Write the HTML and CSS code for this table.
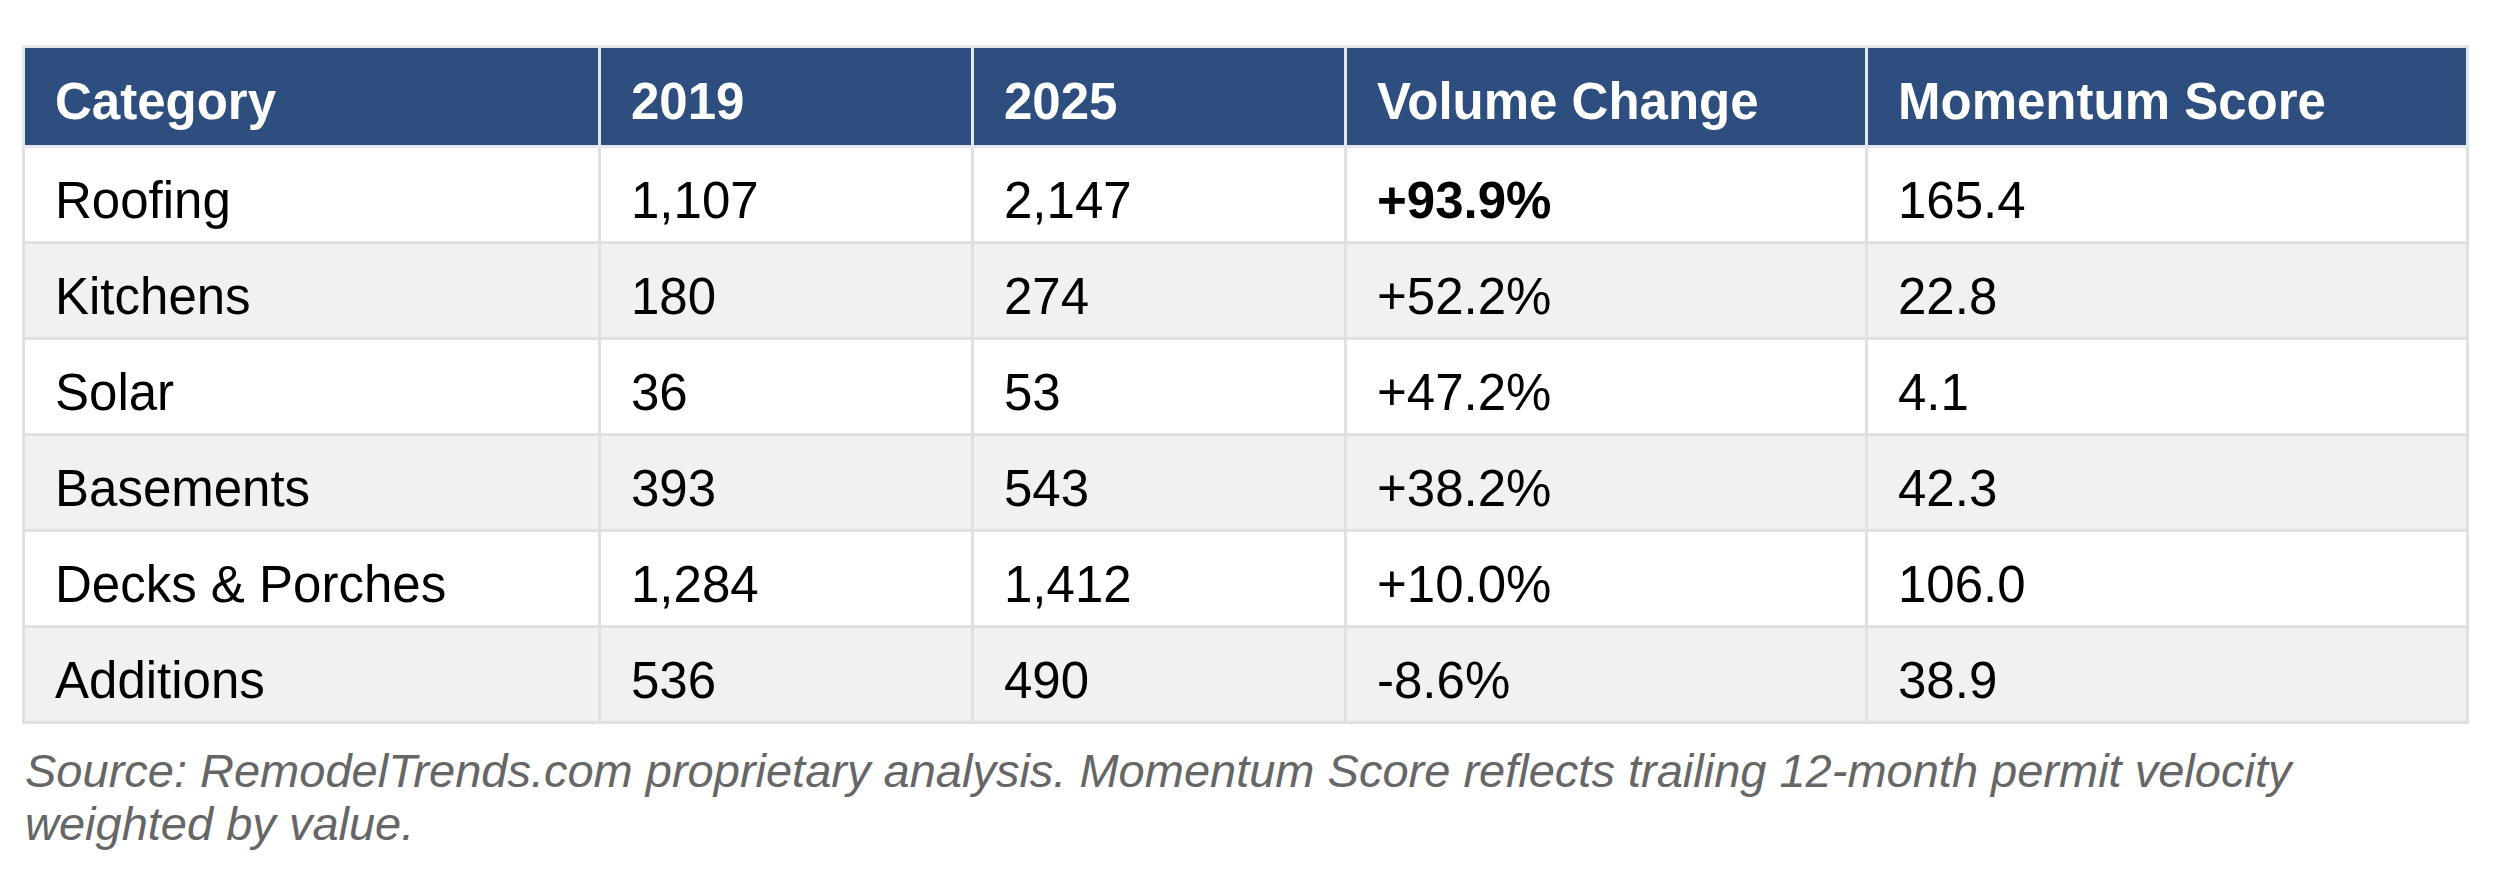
FILE: index.html
```html
<!DOCTYPE html>
<html>
<head>
<meta charset="utf-8">
<link rel="stylesheet" href="styles.css">
</head>
<body>
<div class="page">
  <table class="data">
    <colgroup>
      <col class="c1"><col class="c2"><col class="c3"><col class="c4"><col class="c5">
    </colgroup>
    <thead>
      <tr><th>Category</th><th>2019</th><th>2025</th><th>Volume Change</th><th>Momentum Score</th></tr>
    </thead>
    <tbody>
      <tr><td>Roofing</td><td>1,107</td><td>2,147</td><td class="strong">+93.9%</td><td>165.4</td></tr>
      <tr><td>Kitchens</td><td>180</td><td>274</td><td>+52.2%</td><td>22.8</td></tr>
      <tr><td>Solar</td><td>36</td><td>53</td><td>+47.2%</td><td>4.1</td></tr>
      <tr><td>Basements</td><td>393</td><td>543</td><td>+38.2%</td><td>42.3</td></tr>
      <tr><td>Decks &amp; Porches</td><td>1,284</td><td>1,412</td><td>+10.0%</td><td>106.0</td></tr>
      <tr><td>Additions</td><td>536</td><td>490</td><td>-8.6%</td><td>38.9</td></tr>
    </tbody>
  </table>
  <p class="source">Source: RemodelTrends.com proprietary analysis. Momentum Score reflects trailing 12-month permit velocity weighted by value.</p>
</div>
</body>
</html>
```
FILE: styles.css
```css
html, body {
  margin: 0;
  padding: 0;
  background: #ffffff;
}
.page {
  padding: 45px 0 0 22px;
  width: 2444px;
  font-family: "Liberation Sans", Arial, Helvetica, sans-serif;
}
.data {
  border-collapse: collapse;
  width: 2444px;
  table-layout: fixed;
  border: 3px solid #e2e2e2;
}
.c1 { width: 576px; }
.c2 { width: 373px; }
.c3 { width: 373px; }
.c4 { width: 521px; }
.c5 { width: 601px; }
.data th {
  background: #2e4e80;
  color: #ffffff;
  font-weight: bold;
  font-size: 51px;
  text-align: left;
  vertical-align: middle;
  height: 100px;
  line-height: 60px;
  padding: 10px 30px 0;
  border: 3px solid #e3e6ec;
  box-sizing: border-box;
}
.data td {
  color: #000000;
  font-size: 51px;
  vertical-align: middle;
  height: 96px;
  line-height: 60px;
  padding: 12px 30px 0;
  border: 3px solid #e0e0e0;
  box-sizing: border-box;
}
.data tbody tr:nth-child(odd) td { background: #ffffff; }
.data tbody tr:nth-child(even) td { background: #f1f1f1; }
.data td.strong { font-weight: bold; }
.source {
  margin: 20px 0 0 3px;
  color: #666666;
  font-style: italic;
  font-size: 47px;
  line-height: 53px;
}
```
